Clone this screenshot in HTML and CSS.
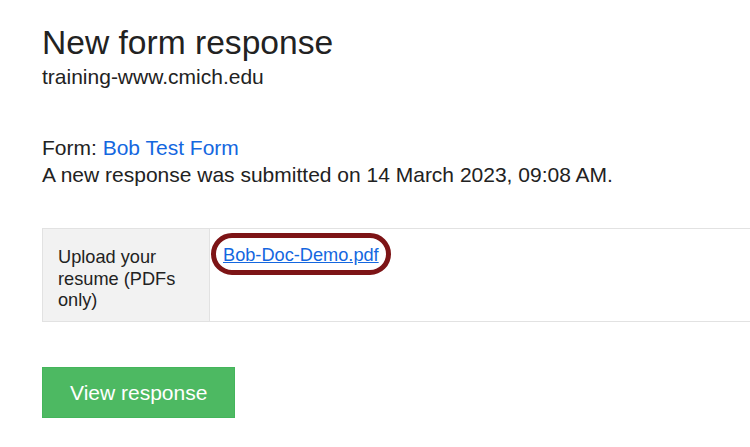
FILE: index.html
```html
<!DOCTYPE html>
<html lang="en">
<head>
<meta charset="utf-8">
<title>New form response</title>
<link rel="stylesheet" href="styles.css">
</head>
<body>
<div class="wrap">
  <h1 class="title">New form response</h1>
  <div class="domain">training-www.cmich.edu</div>
  <div class="info">
    <div>Form: <a class="blue" href="#">Bob Test Form</a></div>
    <div>A new response was submitted on 14 March 2023, 09:08 AM.</div>
  </div>
  <div class="table">
    <div class="label">Upload your resume (PDFs only)</div>
    <div class="value">
      <span class="linkwrap"><a class="file" href="#">Bob-Doc-Demo.pdf</a><span class="oval"></span></span>
    </div>
  </div>
  <a class="button" href="#">View response</a>
</div>
</body>
</html>
```
FILE: styles.css
```css
html, body {
  margin: 0;
  padding: 0;
  background: #ffffff;
}
body {
  font-family: "Liberation Sans", Arial, sans-serif;
  color: #222222;
}
.wrap {
  padding: 23px 0 0 42px;
}
.title {
  font-size: 33.6px;
  line-height: 40px;
  font-weight: normal;
  margin: 0;
  color: #222222;
}
.domain {
  font-size: 21px;
  line-height: 27px;
}
.info {
  margin-top: 44px;
  font-size: 21px;
  line-height: 27px;
}
.blue {
  color: #1467df;
  text-decoration: none;
}
.table {
  margin-top: 40px;
  display: flex;
  border-top: 1px solid #e2e2e2;
  border-bottom: 1px solid #e2e2e2;
  border-left: 1px solid #e2e2e2;
  font-size: 18.2px;
  line-height: 21.5px;
}
.label {
  width: 136px;
  flex: none;
  background: #f2f2f2;
  padding: 18px 15px 9px 15px;
  border-right: 1px solid #e2e2e2;
}
.value {
  flex: 1;
  padding: 16px 13px 12px 13px;
}
.linkwrap {
  position: relative;
  display: inline-block;
}
.file {
  color: #1467df;
  text-decoration: underline;
}
.oval {
  position: absolute;
  left: -12px;
  right: -12px;
  top: -12px;
  bottom: -8px;
  border: 5px solid #7d1416;
  border-radius: 21px;
  pointer-events: none;
}
.button {
  display: inline-block;
  margin-top: 45px;
  background: #4db962;
  border: 1px solid #44b55b;
  color: #ffffff;
  font-size: 21px;
  line-height: 27px;
  padding: 11px 27px;
  text-decoration: none;
}
```
